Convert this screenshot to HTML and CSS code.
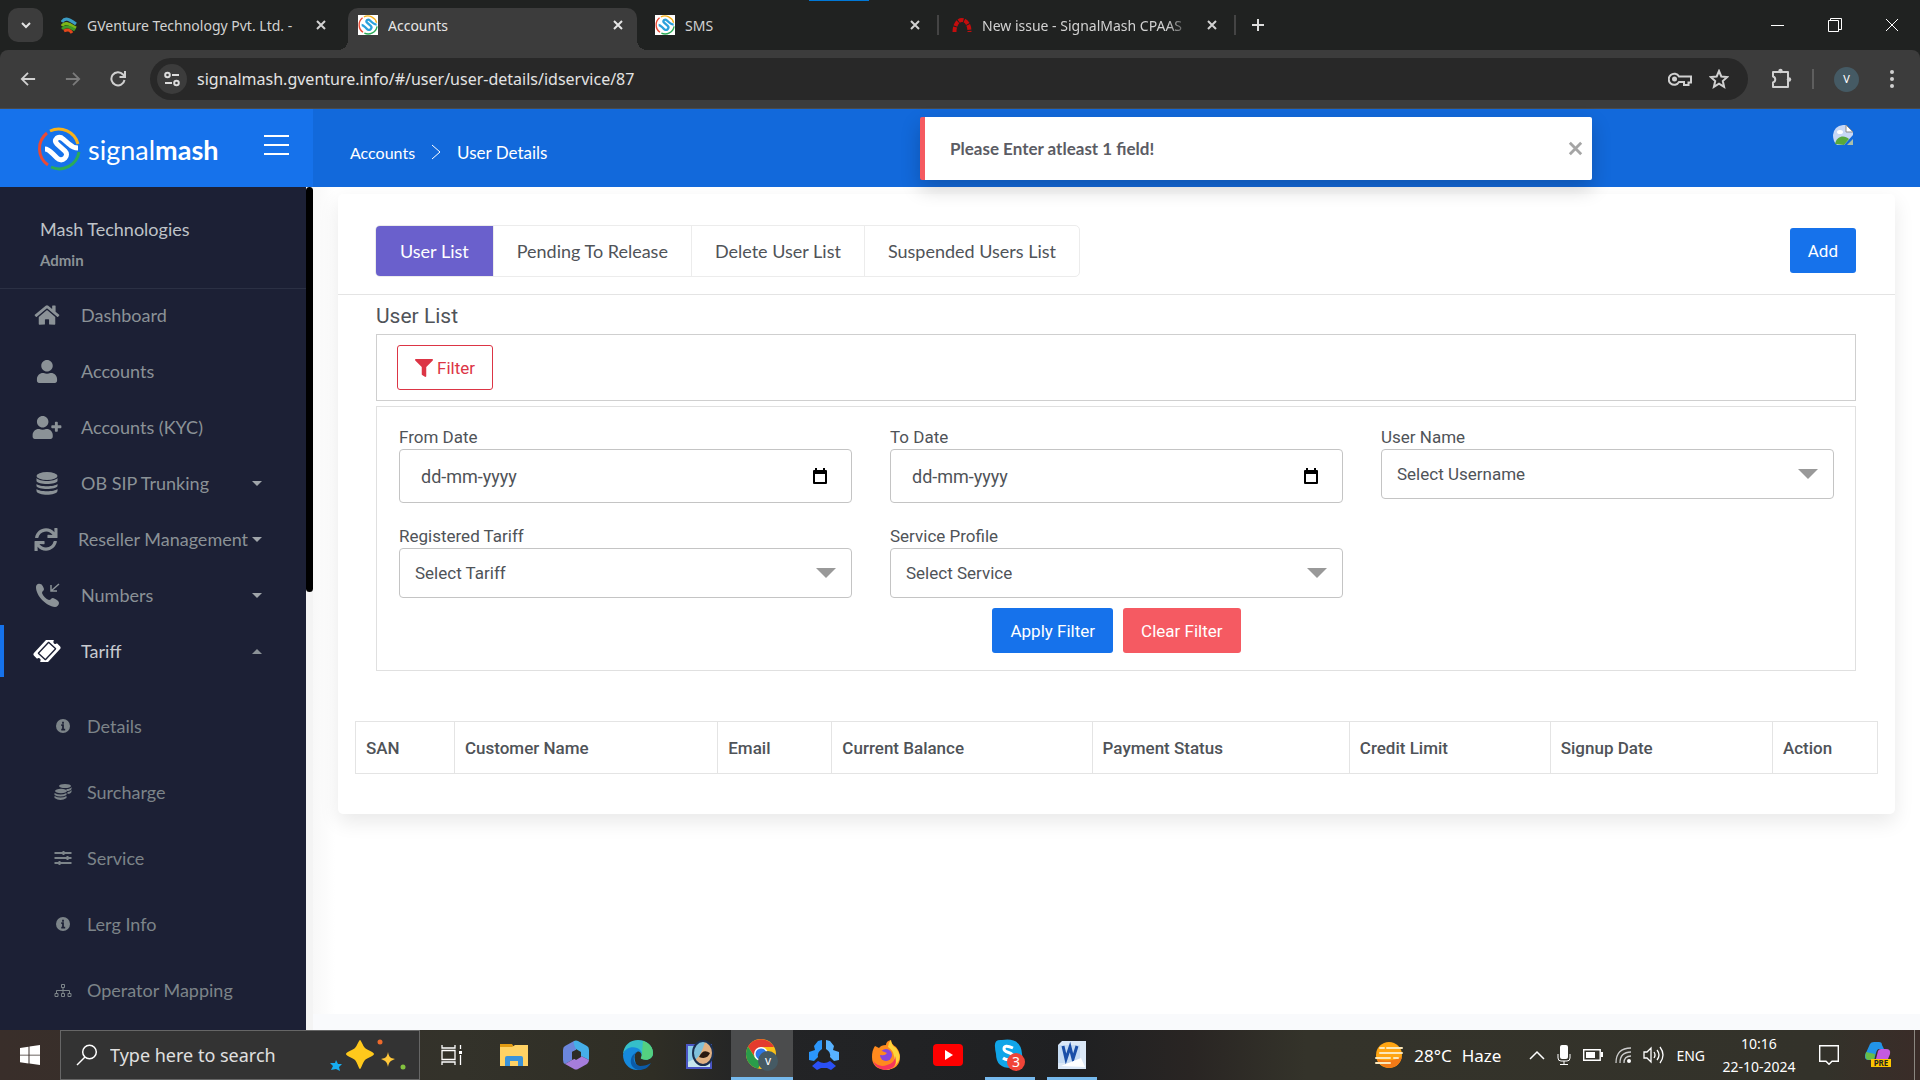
FILE: index.html
```html
<!DOCTYPE html>
<html lang="en">
<head>
  <meta charset="UTF-8">
  <meta name="viewport" content="width=device-width, initial-scale=1.0">
  <title>Accounts</title>
  <link rel="stylesheet" href="styles.css">
</head>
<body>
  <!-- shared icons -->
  <svg class="sprite" aria-hidden="true">
    <symbol id="close" viewBox="0 0 12 12"><path d="M2 2l8 8M10 2l-8 8" fill="none" stroke="currentColor" stroke-width="2"/></symbol>
    <symbol id="mash" viewBox="0 0 44 44">
      <g fill="none" stroke-width="3">
        <path d="M13 4A20 20 0 0 1 41 17" stroke="#f7b21b"/>
        <path d="M10 6A20 20 0 0 0 11 38" stroke="#ea4a35"/>
        <path d="M14 40A20 20 0 0 0 42 25" stroke="#2bab58"/>
        <path d="M8 22c3 0 5 2 8 5l4 4c2 2 5 3 8 0 2-2 2-5 0-7l-8-7c-2-2-2-4 0-6 2-1 4-1 6 1l6 5c3 3 5 4 9 4" stroke="currentColor" stroke-width="5"/>
      </g>
    </symbol>
    <symbol id="info" viewBox="0 0 16 16"><circle cx="8" cy="8" r="8" fill="currentColor"/><path d="M8 3v2.500M6 7h2v5M6 12h4.500" stroke="#1c2035" stroke-width="2" fill="none"/></symbol>
    <symbol id="calendar" viewBox="0 0 14 16"><path d="M1 3h12v12H1z" fill="none" stroke="#000" stroke-width="2" stroke-linejoin="round"/><path d="M1 2h12v4H1zM2 0h2v3H2zM10 0h2v3h-2z"/></symbol>
  </svg>

  <!-- browser tabs -->
  <div class="tabstrip">
    <button class="tab-search" aria-label="Search tabs"><svg width="12" height="12" viewBox="0 0 12 12"><path d="M2 4l4 4 4-4" fill="none" stroke="#e3e3e3" stroke-width="2"/></svg></button>
    <div class="tabs">
      <div class="tab">
        <svg width="16" height="18" viewBox="0 0 16 18"><g fill="none" stroke-width="3"><path d="M1 6c3-5 7-3 14 2" stroke="#3b9cc4"/><path d="M1 10c3-5 7-2 14 2" stroke="#7cb518"/><path d="M1 13c4-4 8-2 13 1" stroke="#3f9a25"/><path d="M3 15c4-2 6-1 8 2" stroke="#e3471b"/></g></svg>
        <span class="tab-title">GVenture Technology Pvt. Ltd. -</span>
        <button class="tab-close" aria-label="Close"><svg width="12" height="12"><use href="#close"/></svg></button>
      </div>
      <div class="tab active">
        <svg class="mash-fav" width="20" height="20"><use href="#mash"/></svg>
        <span class="tab-title">Accounts</span>
        <button class="tab-close" aria-label="Close"><svg width="12" height="12"><use href="#close"/></svg></button>
      </div>
      <div class="tab sep">
        <svg class="mash-fav" width="20" height="20"><use href="#mash"/></svg>
        <span class="tab-title">SMS</span>
        <button class="tab-close" aria-label="Close"><svg width="12" height="12"><use href="#close"/></svg></button>
      </div>
      <div class="tab sep">
        <svg width="20" height="16" viewBox="0 0 20 16"><path d="M2.500 15C2.500 -1 17.500 -1 17.500 15" fill="none" stroke="#c40d0d" stroke-width="4" stroke-dasharray="5 1"/></svg>
        <span class="tab-title fade">New issue - SignalMash CPAAS</span>
        <button class="tab-close" aria-label="Close"><svg width="12" height="12"><use href="#close"/></svg></button>
      </div>
      <button class="new-tab" aria-label="New tab"><svg width="14" height="14" viewBox="0 0 14 14"><path d="M7 1v12M1 7h12" stroke="#ddd" stroke-width="2"/></svg></button>
    </div>
    <div class="window-buttons">
      <button aria-label="Minimize"><svg width="14" height="14" viewBox="0 0 14 14"><path d="M0 7.500h13" stroke="#fff"/></svg></button>
      <button aria-label="Restore"><svg width="14" height="14" viewBox="0 0 14 14"><path d="M.5 2.500h10v11H.5zM2.500 2.500v-2h11v11h-3" fill="none" stroke="#fff"/></svg></button>
      <button aria-label="Close window"><svg width="14" height="14" viewBox="0 0 14 14"><path d="M1 1l12 12M13 1L1 13" stroke="#fff"/></svg></button>
    </div>
    <span class="drag-line"></span>
  </div>

  <!-- address bar -->
  <div class="toolbar-wrap">
    <div class="toolbar">
      <button class="nav-btn" aria-label="Back"><svg width="16" height="16" viewBox="0 0 18 16"><path d="M17 8H2M9 1L2 8l7 7" fill="none" stroke="#d0d0d0" stroke-width="2"/></svg></button>
      <button class="nav-btn" aria-label="Forward"><svg width="16" height="16" viewBox="0 0 18 16"><path d="M1 8h15M9 1l7 7-7 7" fill="none" stroke="#7b7b7b" stroke-width="2"/></svg></button>
      <button class="nav-btn" aria-label="Reload"><svg width="16" height="16" viewBox="0 0 16 16"><path d="M14.500 9A6.600 6.600 0 1 1 13 3.500L15 6M15 0v6H9.500" fill="none" stroke="#d0d0d0" stroke-width="2"/></svg></button>
      <div class="omnibox">
        <button class="site-info" aria-label="Site information"><svg width="16" height="16" viewBox="0 0 16 16"><g fill="none" stroke="#ddd" stroke-width="2"><circle cx="3.500" cy="4" r="2.300"/><path d="M8 4h7M1 12h7"/><circle cx="12.500" cy="12" r="2.300"/></g></svg></button>
        <input class="url" type="text" aria-label="Address" value="signalmash.gventure.info/#/user/user-details/idservice/87">
        <button aria-label="Passwords"><svg width="24" height="16" viewBox="0 0 24 16"><g fill="none" stroke="#d0d0d0" stroke-width="2"><path d="M11 5.500h12v6h-2.500v2.500H16v-3h-5A5.500 5.500 0 1 1 11 5.500z"/></g><circle cx="6.500" cy="8" r="2.500" fill="#d0d0d0"/></svg></button>
        <button aria-label="Bookmark"><svg width="20" height="20" viewBox="0 0 20 20"><path d="M10 2l2.300 5.500 6 .5-4.500 4 1.300 5.800L10 14.700l-5.100 3.100L6.200 12 1.700 8l6-.5z" fill="none" stroke="#d0d0d0" stroke-width="2"/></svg></button>
      </div>
      <button class="ext" aria-label="Extensions"><svg width="22" height="22" viewBox="0 0 22 22"><path d="M3 4h15v15H3v-4.500c3-1 3-5 0-6z" fill="none" stroke="#d0d0d0" stroke-width="2" stroke-linejoin="round"/><circle cx="10.500" cy="3" r="2.200" fill="#d0d0d0"/><circle cx="19" cy="11.500" r="2.200" fill="#d0d0d0"/></svg></button>
      <span class="bar-sep"></span>
      <button class="avatar">V</button>
      <button class="menu" aria-label="Menu"><svg width="4" height="18" viewBox="0 0 4 18" fill="#d0d0d0"><circle cx="2" cy="2" r="2"/><circle cx="2" cy="9" r="2"/><circle cx="2" cy="16" r="2"/></svg></button>
    </div>
  </div>

  <!-- page header -->
  <header class="header">
    <div class="brand">
      <a href="#" class="logo"><svg width="44" height="44"><use href="#mash"/></svg><span>signal<b>mash</b></span></a>
      <button class="hamburger" aria-label="Toggle menu"><svg width="25" height="20" viewBox="0 0 25 20"><path d="M0 1h25M0 10h25M0 19h25" stroke="#fff" stroke-width="2"/></svg></button>
    </div>
    <nav class="breadcrumb">
      <a href="#">Accounts</a>
      <svg width="10" height="16" viewBox="0 0 10 16"><path d="M1 1l8 7-8 7" fill="none" stroke="#fff"/></svg>
      <a href="#" class="current">User Details</a>
    </nav>
    <a href="#" class="profile" aria-label="Profile"><svg width="20" height="20" viewBox="0 0 20 20"><path d="M13 0l7 7v3l-9 10H4Q0 17 0 10 1 1 10 0z" fill="#c8d8f5"/><path d="M2 19c2-9 10-9 14-5l-5 6z" fill="#58a83c"/><path d="M13 0v7h7z" fill="#fff" stroke="#8c8c8c"/><path d="M20 14v6h-6z" fill="#a9bfa9"/><ellipse cx="7" cy="7" rx="3" ry="2" fill="#fff"/></svg></a>
    <div class="toast" role="alert">
      <span>Please Enter atleast 1 field!</span>
      <button aria-label="Dismiss"><svg width="17" height="17"><use href="#close"/></svg></button>
    </div>
  </header>

  <div class="app">
    <aside class="sidebar">
      <div class="account">
        <p class="company">Mash Technologies</p>
        <p class="role">Admin</p>
      </div>
      <ul class="nav">
        <li><a href="#">
          <svg class="ico" width="26" height="22" viewBox="0 0 576 512"><path d="M280.370 148.260L96 300.110V464a16 16 0 0 0 16 16l112.060-.29a16 16 0 0 0 15.920-16V368a16 16 0 0 1 16-16h64a16 16 0 0 1 16 16v95.640a16 16 0 0 0 16 16.050L464 480a16 16 0 0 0 16-16V300L295.670 148.260a12.190 12.190 0 0 0-15.300 0zM571.600 251.470L488 182.560V44.050a12 12 0 0 0-12-12h-56a12 12 0 0 0-12 12v72.610L318.470 43a48 48 0 0 0-61 0L4.340 251.470a12 12 0 0 0-1.600 16.900l25.500 31A12 12 0 0 0 45.150 301l235.220-193.740a12.190 12.190 0 0 1 15.300 0L530.900 301a12 12 0 0 0 16.900-1.600l25.500-31a12 12 0 0 0-1.700-16.930z"/></svg>
          <span>Dashboard</span></a></li>
        <li><a href="#">
          <svg class="ico" width="22" height="23" viewBox="0 0 448 512"><path d="M224 256c70.700 0 128-57.300 128-128S294.700 0 224 0 96 57.300 96 128s57.300 128 128 128zm89.600 32h-16.700c-22.200 10.200-46.900 16-72.900 16s-50.600-5.800-72.900-16h-16.700C60.200 288 0 348.200 0 422.400V464c0 26.500 21.500 48 48 48h352c26.500 0 48-21.500 48-48v-41.600c0-74.200-60.200-134.400-134.400-134.400z"/></svg>
          <span>Accounts</span></a></li>
        <li><a href="#">
          <svg class="ico" width="29" height="23" viewBox="0 0 640 512"><path d="M624 208h-64v-64c0-8.800-7.200-16-16-16h-32c-8.800 0-16 7.200-16 16v64h-64c-8.800 0-16 7.200-16 16v32c0 8.800 7.200 16 16 16h64v64c0 8.800 7.200 16 16 16h32c8.800 0 16-7.200 16-16v-64h64c8.800 0 16-7.200 16-16v-32c0-8.800-7.200-16-16-16zm-400 48c70.700 0 128-57.300 128-128S294.700 0 224 0 96 57.300 96 128s57.300 128 128 128zm89.600 32h-16.700c-22.200 10.200-46.900 16-72.900 16s-50.600-5.800-72.900-16h-16.700C60.200 288 0 348.200 0 422.400V464c0 26.500 21.500 48 48 48h352c26.500 0 48-21.500 48-48v-41.600c0-74.200-60.200-134.400-134.400-134.400z"/></svg>
          <span>Accounts (KYC)</span></a></li>
        <li><a href="#">
          <svg class="ico" width="21" height="23" viewBox="0 0 21 23"><ellipse cx="10.500" cy="4" rx="10.500" ry="4"/><path d="M0 6c3 4 18 4 21 0v3c-1 4-20 4-21 0zM0 12c3 3 18 3 21 0v2c-1 4-20 4-21 0zM0 17c3 3 18 3 21 0v2c-1 5-20 5-21 0z"/></svg>
          <span>OB SIP Trunking</span><i class="caret"></i></a></li>
        <li><a href="#" class="tight">
          <svg class="ico" width="23" height="23" viewBox="0 0 512 512"><path d="M440.650 12.570l4 82.770A247.160 247.160 0 0 0 255.830 8C134.730 8 33.910 94.920 12.290 209.820A12 12 0 0 0 24.090 224h49.050a12 12 0 0 0 11.670-9.260 175.910 175.910 0 0 1 317-56.940l-101.460-4.860a12 12 0 0 0-12.570 12v47.410a12 12 0 0 0 12 12H500a12 12 0 0 0 12-12V12a12 12 0 0 0-12-12h-47.370a12 12 0 0 0-11.980 12.570zM255.830 432a175.610 175.610 0 0 1-146-77.800l101.800 4.870a12 12 0 0 0 12.570-12v-47.400a12 12 0 0 0-12-12H12a12 12 0 0 0-12 12V500a12 12 0 0 0 12 12h47.350a12 12 0 0 0 12-12.600l-4.150-82.570A247.170 247.170 0 0 0 255.830 504c121.110 0 221.930-86.920 243.550-201.820a12 12 0 0 0-11.800-14.180h-49.050a12 12 0 0 0-11.670 9.260A175.860 175.860 0 0 1 255.830 432z"/></svg>
          <span>Reseller Management</span><i class="caret"></i></a></li>
        <li><a href="#">
          <svg class="ico" width="24" height="24" viewBox="0 0 24 24"><path d="M1 4c0-2 2-4 4-3 2 0 3 2 4 5 0 2-2 2-2 4 1 3 4 6 7 7 2 0 2-2 4-2 3 1 6 3 6 5s-2 4-4 4C11 23 1 13 1 4z"/><path d="M24 1l-8 7M16 2v6h6" fill="none" stroke="currentColor" stroke-width="1.500"/></svg>
          <span>Numbers</span><i class="caret"></i></a></li>
        <li><a href="#" class="open">
          <svg class="ico" width="26" height="22" viewBox="0 0 576 512"><path transform="rotate(-47 288 256)" d="M128 160h320v192H128V160zm400 96c0 26.510 21.490 48 48 48v96c0 26.510-21.490 48-48 48H48c-26.510 0-48-21.490-48-48v-96c26.510 0 48-21.490 48-48s-21.490-48-48-48v-96c0-26.510 21.490-48 48-48h480c26.510 0 48 21.490 48 48v96c-26.510 0-48 21.490-48 48zm-48-104c0-13.255-10.745-24-24-24H120c-13.255 0-24 10.745-24 24v208c0 13.255 10.745 24 24 24h336c13.255 0 24-10.745 24-24V152z"/></svg>
          <span>Tariff</span><i class="caret up"></i></a>
          <ul class="subnav">
            <li><a href="#"><svg class="ico" width="14" height="14"><use href="#info"/></svg>Details</a></li>
            <li><a href="#"><svg class="ico" width="17" height="16" viewBox="0 0 17 16"><ellipse cx="10.500" cy="2" rx="6" ry="2"/><path d="M12 5q4 0 5-2v2q-1 2-5 2zM13 8q3 0 4-2v2q-1 2-4 2z"/><ellipse cx="6.500" cy="7" rx="6" ry="2.200"/><path d="M0 9q6 3 12 0v2q-6 3-12 0zM0 12q6 3 12 0v2q-6 4-12 0z"/></svg>Surcharge</a></li>
            <li><a href="#"><svg class="ico" width="17" height="14" viewBox="0 0 17 14"><path d="M0 1h17v2H0zM0 6h17v2H0zM0 11h17v2H0zM8 0h2v4H8zM12 5h2v4h-2zM4 10h2v4H4z"/></svg>Service</a></li>
            <li><a href="#"><svg class="ico" width="14" height="14"><use href="#info"/></svg>Lerg Info</a></li>
            <li><a href="#"><svg class="ico" width="17" height="13" viewBox="0 0 17 13"><g fill="none" stroke="currentColor"><path d="M7 .5h3v3H7zM.5 9.500h3v3h-3zM7 9.500h3v3H7zM13.500 9.500h3v3h-3zM8.500 4v5M2 9V6.500h13V9"/></g></svg>Operator Mapping</a></li>
          </ul>
        </li>
      </ul>
    </aside>
    <div class="side-scroll"><span></span></div>

    <main class="content">
      <section class="card">
        <div class="card-top">
          <div class="tab-group">
            <button class="active">User List</button>
            <button>Pending To Release</button>
            <button>Delete User List</button>
            <button>Suspended Users List</button>
          </div>
          <button class="btn btn-blue">Add</button>
        </div>

        <div class="card-body">
          <h2>User List</h2>
          <div class="filter-bar">
            <button class="btn btn-outline"><svg width="18" height="18" viewBox="0 0 512 512"><path fill="currentColor" d="M487.976 0H24.028C2.710 0-8.047 25.866 7.058 40.971L192 225.941V432c0 7.831 3.821 15.170 10.237 19.662l80 55.980C298.020 518.690 320 507.493 320 487.980V225.941l184.947-184.970C520.021 25.896 509.338 0 487.976 0z"/></svg>Filter</button>
          </div>

          <form class="filters">
            <div class="fields">
              <div class="field">
                <label for="from-date">From Date</label>
                <div class="date"><input type="text" id="from-date" placeholder="dd-mm-yyyy"><button type="button" aria-label="Pick from date"><svg width="14" height="16"><use href="#calendar"/></svg></button></div>
              </div>
              <div class="field">
                <label for="to-date">To Date</label>
                <div class="date"><input type="text" id="to-date" placeholder="dd-mm-yyyy"><button type="button" aria-label="Pick to date"><svg width="14" height="16"><use href="#calendar"/></svg></button></div>
              </div>
              <div class="field">
                <label for="user-name">User Name</label>
                <select id="user-name"><option>Select Username</option></select>
              </div>
              <div class="field">
                <label for="tariff">Registered Tariff</label>
                <select id="tariff"><option>Select Tariff</option></select>
              </div>
              <div class="field">
                <label for="service">Service Profile</label>
                <select id="service"><option>Select Service</option></select>
              </div>
            </div>
            <div class="actions">
              <button type="button" class="btn btn-blue">Apply Filter</button>
              <button type="button" class="btn btn-red">Clear Filter</button>
            </div>
          </form>
        </div>

        <table class="users">
          <thead>
            <tr>
              <th class="w-san">SAN</th>
              <th class="w-name">Customer Name</th>
              <th class="w-email">Email</th>
              <th class="w-balance">Current Balance</th>
              <th class="w-status">Payment Status</th>
              <th class="w-credit">Credit Limit</th>
              <th class="w-signup">Signup Date</th>
              <th>Action</th>
            </tr>
          </thead>
        </table>
      </section>
      <footer class="page-foot"></footer>
    </main>
  </div>

  <!-- windows taskbar -->
  <div class="taskbar">
    <button class="start" aria-label="Start"><svg width="20" height="20" viewBox="0 0 20 20" fill="#fff"><path d="M0 3l8.500-1.300v8H0zM9.500 1.500L20 0v9.700H9.500zM0 10.500h8.500v8L0 17.300zM9.500 10.500H20V20L9.500 18.600z"/></svg></button>
    <div class="search">
      <svg width="22" height="22" viewBox="0 0 22 22"><circle cx="13.500" cy="8" r="6.800" fill="none" stroke="#fff" stroke-width="1.500"/><path d="M9 13l-8 8" stroke="#fff" stroke-width="1.500"/></svg>
      <input type="text" aria-label="Search" placeholder="Type here to search">
      <svg width="76" height="32" viewBox="0 0 76 32"><path d="M30 1c1 0 3 6 5 8s9 4 9 6-7 4-9 6-4 9-5 9-3-7-5-9-9-4-9-6 7-4 9-6 4-8 5-8z" fill="#ffc91c"/><path d="M58 13c1 5 2 6 7 7-5 2-6 3-7 8-1-5-2-6-7-8 5-1 6-2 7-7z" fill="#ffc73a"/><path d="M6 21l2 4 4 0-3 3 1 4-4-2-5 1 2-4-3-3 5 0z" fill="#16adf0"/><circle cx="50" cy="3" r="2.500" fill="#ee6a2c"/><circle cx="73" cy="28" r="2.500" fill="#83c23f"/></svg>
    </div>
    <div class="apps">
      <button aria-label="Task view"><svg width="22" height="20" viewBox="0 0 22 20"><path d="M1 0v3h13V0M1 20v-3h13v3M1 5.500h13v9H1zM19.500 0v4M19.500 10v10" fill="none" stroke="#fff" stroke-width="1.300"/><path d="M18 6h3v3h-3z" fill="#fff"/></svg></button>
      <button aria-label="File Explorer"><svg width="28" height="24" viewBox="0 0 28 24"><path d="M0 1h12l2 3H0z" fill="#e29b12"/><path d="M0 4h12l3-2h13v21H0z" fill="#ffd264"/><path d="M5 23v-8q0-2 2-2h14q2 0 2 2v8h-5v-5h-8v5z" fill="#3b93d9"/></svg></button>
      <button aria-label="Microsoft 365"><svg width="28" height="30" viewBox="0 0 28 30"><path d="M12 1L3 6Q1 7 1 10v10q0 3 2 4l7-4V12l4-2V1z" fill="#6b86dc"/><path d="M12 1q2-1 4 0l9 5q2 1 2 4v10l-8-4v-4l-5-3q-3-5-2-8z" fill="#45aee8"/><path d="M3 24l7-4 9-4 8 4q0 2-2 4l-9 5q-2 1-4 0z" fill="#a67ddc"/><path d="M14 10l5 3v4l-5 3-4-3v-5z" fill="#2d2c26"/></svg></button>
      <button aria-label="Edge"><svg width="30" height="30" viewBox="0 0 30 30"><path d="M0 14C1 5 7 0 15 0c9 0 15 6 15 13 0 6-6 8-11 6-3-1 1-2-1-6C15 8 4 7 0 14z" fill="#35bfc9"/><path d="M20 1c7 2 10 7 10 12 0 6-6 8-11 6-3-1 1-2 0-6z" fill="#54d080"/><path d="M0 15C1 8 9 6 14 8c3 1 5 4 5 6-1-2-3-3-5-2-4 2-3 12 3 18C7 31 0 24 0 15z" fill="#1689dc"/><path d="M14 12c-6 5-3 13 3 14 4 0 8-1 11-3-3 5-7 7-12 7C6 29 5 16 14 12z" fill="#0b5ba8"/></svg></button>
      <button aria-label="Image viewer"><svg width="30" height="30" viewBox="0 0 30 30"><path d="M2 5h24v23H2z" fill="#8ccbe8" stroke="#4a55c4" stroke-width="2"/><path d="M3 22l8-4 14 4v5H3z" fill="#c9e6ee"/><ellipse cx="18" cy="13" rx="10" ry="12" fill="#7fc0dc"/><path d="M20 2Q28 6 28 13T20 25Q8 23 10 20q6-4 10-18z" fill="#e0b083"/><ellipse cx="18" cy="13" rx="10" ry="12" fill="none" stroke="#1b2f50" stroke-width="2"/><path d="M14 17q4-9 11-4-3 7-11 4z" fill="#2a1810"/></svg></button>
      <button class="running focus" aria-label="Chrome"><svg width="32" height="32" viewBox="0 0 32 32"><circle cx="15" cy="15" r="15" fill="#fbc116"/><path d="M2 7.500A15 15 0 0 1 28 8H15l-6 10z" fill="#e33b2e"/><path d="M2 7.500l7 11 7 4-4 7.200A15 15 0 0 1 2 7.500z" fill="#2a9c4a"/><circle cx="15" cy="15" r="7" fill="#fff"/><circle cx="15" cy="15" r="5.500" fill="#2d78ea"/><circle cx="22" cy="22" r="10" fill="#455a64"/><text x="22" y="26" class="badge-v">v</text></svg></button>
      <button aria-label="Hubstaff"><svg width="30" height="30" viewBox="0 0 30 30"><path d="M13 0L9 1 5 6l1 4-6 2v8l5 1 4-4q-1-5 4-8z" fill="#2b96fb"/><path d="M17 0l4 1 4 5-1 4 6 2v8l-5 1-4-4q1-5-4-8z" fill="#58b2ff"/><path d="M3 26l6-5q6 4 12 0l6 5-5 4-4-2h-6l-4 2z" fill="#2a50f5"/></svg></button>
      <button aria-label="Firefox"><svg width="28" height="30" viewBox="0 0 28 30"><path d="M3 6q2 1 4 2 2-3 7-3 0-4 5-5 0 4 5 7 4 5 4 10 0 12-14 13Q0 29 0 17 0 10 3 6z" fill="#ff8a1e"/><path d="M19 0q0 5 5 8 6 8 2 14-5 8-12 8 9-4 8-14-1-6-6-9 0-4 3-7z" fill="#ffd43a"/><path d="M1 21q6 7 14 4 8-2 8-9 4 13-10 14Q4 29 1 21z" fill="#f7375b"/><circle cx="14" cy="15" r="6" fill="#8545dc"/><path d="M3 8q3 0 7 3l5 2q-2 3-6 2-4 0-6 4z" fill="#ff8a1e"/></svg></button>
      <button aria-label="YouTube"><svg width="30" height="22" viewBox="0 0 30 22"><rect width="30" height="22" rx="4" fill="#f00"/><path d="M12 6l8 5-8 5z" fill="#fff"/></svg></button>
      <button class="running" aria-label="Skype"><svg width="32" height="32" viewBox="0 0 32 32"><path d="M1 8Q0 0 8 1q19-3 20 14 2 14-11 14Q2 29 2 15 1 11 1 8z" fill="#10a5e8"/><path d="M19 9Q10 5 10 10c0 4 9 3 9 7s-6 5-10 2" fill="none" stroke="#fff" stroke-width="3"/><circle cx="22" cy="23" r="9" fill="#f04438"/><text x="22" y="28" class="badge-n">3</text></svg></button>
      <button class="running" aria-label="Word"><svg width="28" height="28" viewBox="0 0 28 28"><path d="M4 0h24v28H0V4z" fill="#dbe8f7"/><path d="M0 4h22v18H0z" fill="#c5dbf3"/><path d="M5 5l3 13 4-12 3 12 4-13" fill="none" stroke="#1a4fa8" stroke-width="3"/><path d="M3 25l20-8 4 9z" fill="#fff"/></svg></button>
    </div>
    <div class="tray">
      <button class="weather"><svg width="30" height="26" viewBox="0 0 30 26"><circle cx="15" cy="13" r="13" fill="#ffa512"/><path d="M3 17q12 4 25-2-3 11-13 11Q6 25 3 17z" fill="#f27a17"/><path d="M6 6h4M13 6h15M6 11h22M2 16h14M20 16h4M2 21h14" stroke="#fbe8bb" stroke-width="2" stroke-linecap="round"/></svg><span>28°C</span><span>Haze</span></button>
      <button aria-label="Show hidden icons"><svg width="16" height="10" viewBox="0 0 16 10"><path d="M1 9l7-7 7 7" fill="none" stroke="#fff" stroke-width="1.500"/></svg></button>
      <button aria-label="Microphone"><svg width="14" height="20" viewBox="0 0 14 20"><rect x="3" width="8" height="14" rx="2" fill="#fff"/><path d="M1 9v4q0 3 3 3h6q3 0 3-3V9M7 16v3M3 19.500h8" fill="none" stroke="#fff"/></svg></button>
      <button aria-label="Battery"><svg width="20" height="12" viewBox="0 0 20 12"><path d="M.7.7h16.500v10.600H.7z" fill="none" stroke="#fff" stroke-width="1.400"/><path d="M3 3h9v6H3zM18 3h2v5h-2z" fill="#fff"/></svg></button>
      <button aria-label="Network"><svg width="16" height="16" viewBox="0 0 16 16"><path d="M1 16Q1 1 16 1M5 16Q5 5 16 5M9 16q0-7 7-7" fill="none" stroke="#ccc" stroke-width="1.300"/><circle cx="14" cy="14" r="2" fill="#fff"/></svg></button>
      <button aria-label="Volume"><svg width="21" height="18" viewBox="0 0 21 18"><path d="M1 6h3l4-4v14l-4-4H1zM11 6q2 3 0 6M14 4q4 5 0 10M17 1q6 8 0 16" fill="none" stroke="#fff" stroke-width="1.300"/></svg></button>
      <button class="lang">ENG</button>
      <button class="clock"><span>10:16</span><span>22-10-2024</span></button>
      <button class="notice" aria-label="Notifications"><svg width="20" height="20" viewBox="0 0 20 20"><path d="M.7.7h18.600v15.600H13l-3 3-3-3H.7z" fill="none" stroke="#fff" stroke-width="1.400"/></svg></button>
      <button class="copilot" aria-label="Copilot"><svg width="26" height="26" viewBox="0 0 26 26"><path d="M5 2q1-2 4-2h5q3 0 3 3l2 4h-5q-2 0-3 4l-2 7H4q-5 0-4-5z" fill="#2294e8"/><path d="M1 10l9 2-1 6H4q-5 0-3-8z" fill="#68bd48"/><path d="M13 9q1-2 3-2h5q5 0 4 5l-2 5H11z" fill="#c45ae0"/><path d="M6 17h20v8H6z" fill="#fdc500"/><text x="16" y="24" class="badge-pre">PRE</text></svg></button>
      <span class="desktop-edge"></span>
    </div>
  </div>
</body>
</html>
```
FILE: styles.css
```css
* {
  box-sizing: border-box;
}
body {
  margin: 0;
  height: 100vh;
  display: flex;
  flex-direction: column;
  overflow: hidden;
  font-family: Roboto, Arial, sans-serif;
  font-size: 17px;
  color: #4f5358;
  background: #fff;
}
button {
  font: inherit;
  color: inherit;
  background: none;
  border: none;
  padding: 0;
  cursor: pointer;
}
input, select {
  font: inherit;
  color: inherit;
}
a {
  color: inherit;
  text-decoration: none;
}
ul {
  list-style: none;
  margin: 0;
  padding: 0;
}
svg {
  display: block;
  flex: none;
}
.sprite {
  position: absolute;
  width: 0;
  height: 0;
}

/* browser */
.tabstrip {
  position: relative;
  height: 50px;
  flex: none;
  display: flex;
  background: #202221;
  color: #d2d2d2;
  font-family: "Noto Sans", sans-serif;
  font-size: 14px;
}
.drag-line {
  position: absolute;
  top: 0;
  left: 809px;
  width: 60px;
  height: 1px;
  background: #0078d7;
}
.tab-search {
  width: 35px;
  height: 34px;
  margin: 8px 8px 0 8px;
  border-radius: 10px;
  background: #3c3c3c;
  display: flex;
  align-items: center;
  justify-content: center;
}
.tabs {
  display: flex;
  flex: 1;
}
.tab {
  position: relative;
  width: 289px;
  height: 42px;
  margin: 8px 8px 0 0;
  padding: 0 9px 8px 10px;
  display: flex;
  align-items: center;
  gap: 10px;
}
.tab.active {
  background: #3c3c3c;
  border-radius: 10px 10px 0 0;
  color: #e6e6e6;
}
.tab.active::before,
.tab.active::after {
  content: "";
  position: absolute;
  bottom: 0;
  width: 10px;
  height: 10px;
}
.tab.active::before {
  left: -10px;
  background: radial-gradient(circle at 0 0, #202221 10px, #3c3c3c 10px);
}
.tab.active::after {
  right: -10px;
  background: radial-gradient(circle at 100% 0, #202221 10px, #3c3c3c 10px);
}
.tab.sep::after {
  content: "";
  position: absolute;
  right: -5px;
  top: 7px;
  width: 2px;
  height: 20px;
  background: #444;
}
.tab-title {
  flex: 1;
  white-space: nowrap;
  overflow: hidden;
}
.tab-title.fade {
  mask-image: linear-gradient(to right, #000 88%, transparent);
}
.tab-close {
  width: 20px;
  display: flex;
  justify-content: center;
}
.mash-fav {
  background: #fff;
  color: #2ba1dc;
}
.new-tab {
  padding: 0 13px 0 12px;
}
.window-buttons {
  display: flex;
}
.window-buttons button {
  width: 57px;
  display: flex;
  align-items: center;
  justify-content: center;
}
.toolbar-wrap {
  flex: none;
  background: #202221;
}
.toolbar {
  height: 59px;
  display: flex;
  align-items: center;
  padding: 0 13px 0 5px;
  background: #3c3c3c;
  border-bottom: 1px solid #4a4a4a;
  border-radius: 8px 8px 0 0;
}
.nav-btn {
  width: 45px;
  display: flex;
  justify-content: center;
}
.omnibox {
  flex: 1;
  height: 42px;
  margin: 0 22px 0 10px;
  padding: 0 19px 0 7px;
  display: flex;
  align-items: center;
  gap: 17px;
  background: #282828;
  border-radius: 21px;
}
.site-info {
  width: 30px;
  height: 30px;
  border-radius: 50%;
  background: #3c3c3c;
  display: flex;
  align-items: center;
  justify-content: center;
}
.url {
  flex: 1;
  margin-left: -7px;
  padding: 0;
  border: none;
  outline: none;
  background: none;
  color: #e3e3e3;
  font-family: "Noto Sans", sans-serif;
  font-size: 16px;
}
.bar-sep {
  width: 2px;
  height: 20px;
  margin: 0 20px;
  background: #5e5e5e;
}
.avatar {
  width: 25px;
  height: 25px;
  border-radius: 50%;
  background: #455a64;
  color: #fff;
  font-size: 11px;
}
.menu {
  width: 30px;
  margin-left: 18px;
  display: flex;
  justify-content: center;
}

/* header */
.header {
  position: relative;
  height: 78px;
  flex: none;
  display: flex;
  background: #1269db;
  color: #fff;
  font-family: Lato, sans-serif;
}
.brand {
  width: 313px;
  padding: 18px 24px 16px 37px;
  display: flex;
  justify-content: space-between;
  background: #1672eb;
}
.logo {
  display: flex;
  align-items: center;
  gap: 7px;
  font-size: 27px;
}
.hamburger {
  align-self: flex-start;
  padding-top: 8px;
}
.breadcrumb {
  display: flex;
  flex: 1;
  align-items: center;
  gap: 16px;
  padding: 8px 0 0 37px;
  font-size: 16px;
}
.breadcrumb .current {
  font-size: 17px;
}
.profile {
  padding: 16px 67px 0 0;
}
.toast {
  position: absolute;
  z-index: 2;
  top: 8px;
  left: 920px;
  right: 328px;
  height: 63px;
  padding: 0 8px 0 25px;
  display: flex;
  align-items: center;
  justify-content: space-between;
  background: #fff;
  border-left: 5px solid #f55a60;
  border-radius: 2px;
  box-shadow: 0 8px 20px rgba(0, 0, 0, 0.2);
  color: #5b5c64;
  font-size: 17px;
  font-weight: bold;
}
.toast button {
  color: #a5a5a5;
}

/* sidebar */
.app {
  flex: 1;
  min-height: 0;
  display: flex;
}
.sidebar {
  width: 306px;
  flex: none;
  overflow: hidden;
  background: #1c2035;
  color: #8b9297;
  font-family: Lato, sans-serif;
  font-size: 18px;
}
.side-scroll {
  width: 7px;
  flex: none;
  background: #f4f4f4;
}
.side-scroll span {
  display: block;
  height: 405px;
  border-radius: 4px;
  background: #000;
}
.account {
  height: 102px;
  padding: 30px 40px 0;
  border-bottom: 1px solid #2b3044;
}
.account p {
  margin: 0 0 8px;
  line-height: 25px;
}
.account .company {
  color: #bfc3c8;
}
.account .role {
  font-size: 15px;
  font-weight: bold;
  line-height: 20px;
}
.nav > li > a {
  height: 52px;
  margin-bottom: 4px;
  padding: 0 44px 0 27px;
  display: flex;
  align-items: center;
  border-left: 4px solid transparent;
}
.nav .ico {
  fill: currentColor;
}
.nav > li > a .ico {
  width: 32px;
}
.nav > li > a span {
  flex: 1;
  padding-left: 18px;
  white-space: nowrap;
}
.nav > li > a.tight span {
  padding-left: 16px;
}
.nav > li > a.tight {
  padding-left: 26px;
}
.nav > li > a.open {
  border-left-color: #1672eb;
  color: #fff;
}
.nav > li > a.open span {
  color: #c8cbd0;
}
.caret {
  border: 5px solid transparent;
  border-top-color: #a0a5aa;
  border-bottom: none;
}
.caret.up {
  border-top: none;
  border-bottom: 5px solid #8b9297;
}
.subnav {
  padding-top: 12px;
}
.subnav a {
  height: 66px;
  padding-left: 53px;
  display: flex;
  align-items: center;
  gap: 14px;
  color: #7c8489;
}
.subnav .ico {
  width: 20px;
}

/* content */
.content {
  flex: 1;
  display: flex;
  flex-direction: column;
  background: linear-gradient(to right, #f8f8f8, #fff 22px);
}
.card {
  margin: 7px 25px 0;
  background: #fff;
  border-radius: 5px;
  box-shadow: 0 8px 20px rgba(0, 0, 0, 0.09);
  padding-bottom: 40px;
}
.card-top {
  height: 101px;
  padding: 0 39px 0 37px;
  display: flex;
  align-items: center;
  justify-content: space-between;
  border-bottom: 1px solid #e4e4e4;
}
.card-top .tab-group {
  margin-top: 13px;
}
.card-top .btn {
  margin-top: 13px;
}
.tab-group {
  display: flex;
  height: 52px;
  border: 1px solid #ececec;
  border-radius: 5px;
  overflow: hidden;
  font-family: Lato, sans-serif;
  font-size: 18px;
}
.tab-group button {
  padding: 0 23px;
  border-right: 1px solid #ececec;
}
.tab-group button:last-child {
  border-right: none;
}
.tab-group button.active {
  padding: 0 24px;
  background: #6a60cc;
  color: #fff;
}
.btn {
  height: 45px;
  padding: 0 18px;
  border-radius: 3px;
  font-size: 17px;
}
.btn-blue {
  background: #1672eb;
  color: #fff;
}
.btn-red {
  background: #f55a62;
  color: #fff;
}
.btn-outline {
  display: flex;
  align-items: center;
  gap: 4px;
  padding: 0 17px;
  border: 1px solid #dc3545;
  color: #dc3545;
}
.card-body {
  padding: 0 39px 0 38px;
}
h2 {
  margin: 0;
  padding: 9px 0 6px;
  font-size: 21px;
  font-weight: normal;
  line-height: 24px;
}
.filter-bar {
  padding: 10px 20px;
  border: 1px solid #cfcfcf;
  margin-bottom: 5px;
}
.filters {
  border: 1px solid #e0e0e0;
  padding: 18px 21px 17px 22px;
}
.fields {
  display: grid;
  grid-template-columns: repeat(3, 1fr);
  column-gap: 38px;
  row-gap: 21px;
  align-items: start;
}
.field label {
  display: block;
  line-height: 24px;
}
.date,
.field select {
  width: 100%;
  height: 50px;
  border: 1px solid #c4c4c4;
  border-radius: 4px;
  background-color: #fff;
}
.date {
  height: 54px;
  padding: 0 24px 0 21px;
  display: flex;
  align-items: center;
}
.date input {
  flex: 1;
  padding: 0;
  border: none;
  outline: none;
  font-size: 18px;
}
.date input::placeholder {
  color: #4f5358;
}
.field select {
  appearance: none;
  padding: 0 15px;
  background-image: url("data:image/svg+xml,%3Csvg xmlns='http://www.w3.org/2000/svg' width='20' height='10'%3E%3Cpath d='M0 0h20L10 10z' fill='%23999'/%3E%3C/svg%3E");
  background-repeat: no-repeat;
  background-position: right 15px center;
}
.actions {
  display: flex;
  justify-content: center;
  gap: 10px;
  margin-top: 10px;
}
.users {
  width: calc(100% - 34px);
  margin: 50px 17px 0;
  border-collapse: collapse;
}
.users th {
  height: 52px;
  padding: 0 10px;
  border: 1px solid #e4e4e4;
  text-align: left;
  font-size: 17px;
  font-weight: 500;
}
.w-san { width: 6.5%; }
.w-name { width: 17.3%; }
.w-email { width: 7.5%; }
.w-balance { width: 17.1%; }
.w-status { width: 16.9%; }
.w-credit { width: 13.2%; }
.w-signup { width: 14.6%; }
.page-foot {
  height: 16px;
  margin-top: auto;
  background: #f9fafc;
}

/* taskbar */
.taskbar {
  height: 50px;
  flex: none;
  display: flex;
  background: linear-gradient(to right, #392e2a, #33322a 24%, #2f2e25 34%, #232426 39%, #1f2022 56%, #292523 62%, #34332a 68%, #33322a 95%, #3a2c28);
  color: #fff;
  font-family: "Noto Sans", sans-serif;
}
.taskbar button {
  display: flex;
  align-items: center;
  justify-content: center;
}
.start {
  width: 60px;
}
.search {
  width: 360px;
  padding: 0 13px 0 15px;
  display: flex;
  align-items: center;
  gap: 12px;
  background: #333;
  border: 1px solid #666;
}
.search input {
  flex: 1;
  min-width: 0;
  padding: 0;
  border: none;
  outline: none;
  background: none;
  font-size: 18px;
}
.search input::placeholder {
  color: #e0e0e0;
}
.apps {
  display: flex;
  flex: 1;
  padding-left: 1px;
}
.apps button {
  width: 62px;
  border-top: 3px solid transparent;
  border-bottom: 3px solid transparent;
}
.apps .running {
  width: 50px;
  margin: 0 6px;
  border-bottom-color: #76b9ed;
}
.apps .focus {
  width: 62px;
  margin: 0;
  border-top-color: #4b4c4d;
  background: #4b4c4d;
}
.badge-v, .badge-n, .badge-pre {
  fill: #fff;
  font-size: 12px;
  text-anchor: middle;
}
.badge-n {
  font-size: 14px;
}
.badge-pre {
  fill: #222;
  font-size: 8px;
  font-weight: bold;
}
.tray {
  display: flex;
  align-items: center;
  gap: 12px;
}
.tray button {
  height: 50px;
}
.weather {
  gap: 10px;
  margin-right: 16px;
  font-size: 17px;
}
.lang {
  font-size: 14px;
}
.clock {
  flex-direction: column;
  width: 84px;
  font-size: 14px;
  line-height: 23px;
}
.notice {
  margin: 0 14px 0 6px;
}
.desktop-edge {
  width: 6px;
  height: 50px;
  margin-left: 11px;
  border-left: 1px solid #8b8780;
}
```
